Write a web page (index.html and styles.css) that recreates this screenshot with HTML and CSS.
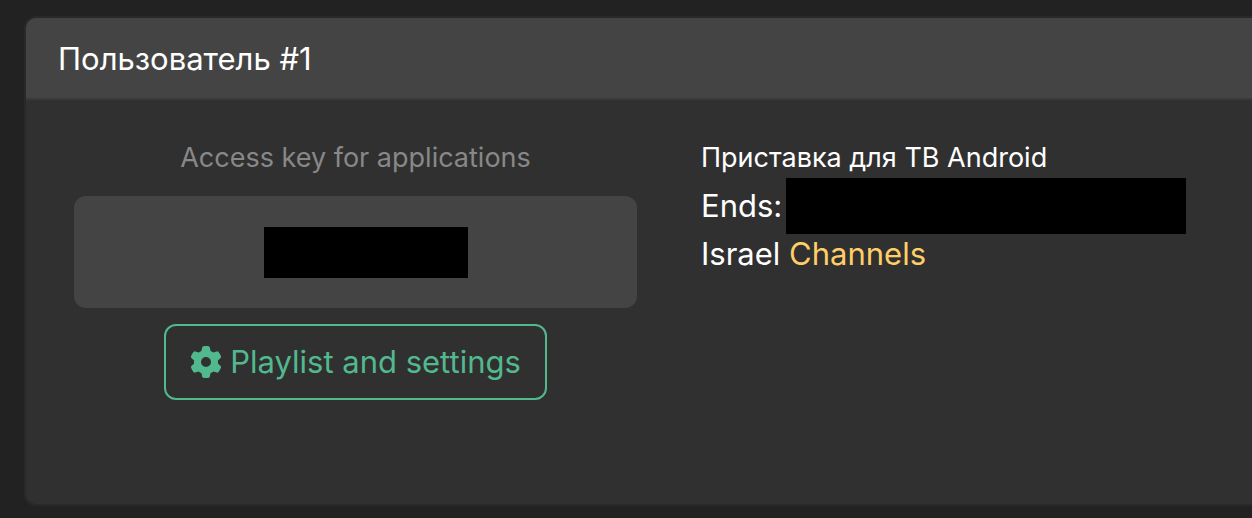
FILE: index.html
```html
<!DOCTYPE html>
<html lang="ru">
<head>
<meta charset="utf-8">
<title>Пользователь #1</title>
<link rel="stylesheet" href="styles.css">
</head>
<body>
<main class="card">
  <h1 class="card-header">Пользователь #1</h1>
  <div class="card-body">
    <section class="access">
      <p class="access-label">Access key for applications</p>
      <div class="key-box"><span class="key-mask"></span></div>
      <button class="settings" type="button">
        <svg class="gear" viewBox="0 0 512 512" aria-hidden="true"><path fill="currentColor" d="M495.900 166.600c3.200 8.700.5 18.400-6.400 24.600l-43.300 39.400c1.100 8.300 1.700 16.800 1.700 25.400s-.6 17.100-1.700 25.400l43.300 39.400c6.900 6.200 9.600 15.900 6.400 24.600-4.400 11.900-9.700 23.300-15.800 34.300l-4.700 8.100c-6.600 11-14 21.400-22.100 31.200-5.900 7.200-15.700 9.600-24.500 6.800l-55.700-17.700c-13.400 10.300-28.200 18.900-44 25.400l-12.500 57.100c-2 9.100-9 16.300-18.200 17.800-13.800 2.300-28 3.500-42.500 3.500s-28.700-1.200-42.500-3.500c-9.200-1.500-16.200-8.700-18.200-17.800l-12.500-57.100c-15.800-6.500-30.600-15.100-44-25.400l-55.600 17.800c-8.800 2.800-18.600.3-24.500-6.800-8.100-9.800-15.500-20.200-22.100-31.200l-4.700-8.100c-6.100-11-11.400-22.400-15.800-34.300-3.200-8.700-.5-18.400 6.400-24.600l43.300-39.400C64.600 273.100 64 264.600 64 256s.6-17.100 1.700-25.400l-43.300-39.400c-6.900-6.200-9.600-15.900-6.400-24.600 4.400-11.900 9.700-23.300 15.800-34.300l4.700-8.100c6.600-11 14-21.400 22.100-31.200 5.900-7.200 15.700-9.600 24.500-6.800l55.700 17.700c13.400-10.300 28.200-18.900 44-25.400l12.500-57.100c2-9.100 9-16.300 18.200-17.800C227.300 1.200 241.500 0 256 0s28.700 1.200 42.500 3.500c9.200 1.500 16.200 8.700 18.200 17.800l12.500 57.100c15.800 6.500 30.600 15.100 44 25.400l55.700-17.700c8.800-2.800 18.600-.3 24.500 6.800 8.100 9.800 15.500 20.200 22.100 31.200l4.700 8.100c6.100 11 11.400 22.400 15.800 34.300zM256 336a80 80 0 1 0 0-160 80 80 0 1 0 0 160z"/></svg>
        <span>Playlist and settings</span>
      </button>
    </section>
    <section class="details">
      <p class="device">Приставка для ТВ Android</p>
      <p class="ends"><span>Ends:</span><span class="date-mask"></span></p>
      <p>Israel <a class="channels" href="#">Channels</a></p>
    </section>
  </div>
</main>
</body>
</html>
```
FILE: styles.css
```css
* { box-sizing: border-box; }
body {
  margin: 0;
  padding: 16px 0 12px 24px;
  background: #222;
  color: #fff;
  font: 31px/48px Inter, "Noto Sans", sans-serif;
  overflow-x: hidden;
}
p, h1 { margin: 0; }
.card {
  background: #303030;
  border: 2px solid #292929;
  border-right: 0;
  border-radius: 12px 0 0 12px;
  overflow: hidden;
}
.card-header {
  padding: 17px 32px 15px;
  background: #444;
  border-bottom: 2px solid #3a3a3a;
  font-size: 31px;
  font-weight: 400;
}
.card-body {
  display: grid;
  grid-template-columns: 563fr 551fr;
  column-gap: 64px;
  min-height: 404px;
  padding: 34px 0 0 48px;
}
.access {
  display: flex;
  flex-direction: column;
  align-items: center;
}
.access-label { font-size: 27px; color: #888; }
.key-box {
  display: flex;
  align-items: center;
  justify-content: center;
  width: 100%;
  height: 112px;
  margin: 14px 0 16px;
  padding-left: 20px;
  background: #444;
  border-radius: 12px;
}
.key-mask { width: 204px; height: 51px; background: #000; }
.settings {
  display: flex;
  align-items: center;
  gap: 8px;
  padding: 12px 24px;
  border: 2px solid #52b98f;
  border-radius: 12px;
  background: transparent;
  color: #52b98f;
  font: inherit;
}
.gear { width: 32px; height: 32px; }
.device { font-size: 27px; }
.ends { display: flex; align-items: center; gap: 4px; }
.date-mask { width: 400px; height: 56px; margin: -4px 0; background: #000; }
.channels { color: #ffce67; text-decoration: none; }
```
